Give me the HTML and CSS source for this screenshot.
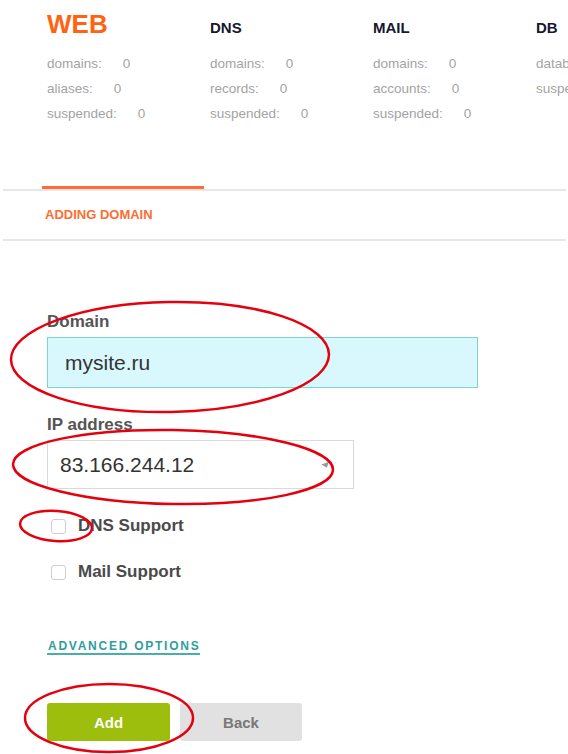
FILE: index.html
```html
<!DOCTYPE html>
<html lang="en">
<head>
<meta charset="UTF-8"/>
<meta name="viewport" content="width=device-width, initial-scale=1.0"/>
<title>Adding domain</title>
<link rel="stylesheet" href="styles.css">
</head>
<body>
<div class="page">
  <!-- Summary of services -->
  <div class="summary">
    <div class="svc-title svc-active">WEB</div>
    <div class="svc-title">DNS</div>
    <div class="svc-title">MAIL</div>
    <div class="svc-title">DB</div>

    <ul class="stats">
      <li>domains:<span class="val">0</span></li>
      <li>aliases:<span class="val">0</span></li>
      <li>suspended:<span class="val">0</span></li>
    </ul>
    <ul class="stats">
      <li>domains:<span class="val">0</span></li>
      <li>records:<span class="val">0</span></li>
      <li>suspended:<span class="val">0</span></li>
    </ul>
    <ul class="stats">
      <li>domains:<span class="val">0</span></li>
      <li>accounts:<span class="val">0</span></li>
      <li>suspended:<span class="val">0</span></li>
    </ul>
    <ul class="stats">
      <li>databases:<span class="val">0</span></li>
      <li>suspended:<span class="val">0</span></li>
    </ul>
  </div>

  <div class="tabs"><div class="tab-active"></div></div>
  <div class="section-head">ADDING DOMAIN</div>

  <!-- Form -->
  <form class="form">
    <label class="field-label">Domain</label>
    <input class="text-input" type="text" value="mysite.ru">

    <label class="field-label gap">IP address</label>
    <div class="select">83.166.244.12<span class="select-arrow"></span></div>

    <div class="check-row first"><span class="checkbox"></span>DNS Support</div>
    <div class="check-row"><span class="checkbox"></span>Mail Support</div>

    <div class="advanced-wrap"><a class="advanced" href="#">ADVANCED OPTIONS</a></div>

    <div class="buttons">
      <button type="button" class="btn btn-add">Add</button>
      <button type="button" class="btn btn-back">Back</button>
    </div>
  </form>

  <!-- Hand-drawn red marks over the screenshot -->
  <svg class="marks" width="568" height="754" viewBox="0 0 568 754">
    <ellipse cx="170" cy="357" rx="159" ry="55" transform="rotate(-1 170 357)"/>
    <ellipse cx="173" cy="467" rx="160" ry="37" transform="rotate(1 173 467)"/>
    <ellipse cx="56" cy="526" rx="36" ry="15" transform="rotate(4 56 526)"/>
    <ellipse cx="109" cy="718" rx="84" ry="34"/>
  </svg>
</div>
</body>
</html>
```

FILE: styles.css
```css
/* Global */
html, body {
  margin:0; padding:0;
  background:#fff;
  font-family:"Liberation Sans", Arial, sans-serif;
  overflow:hidden;
}
.page {
  position:relative;
  width:568px;
  height:754px;
  overflow:hidden;
}

/* Summary => 4 columns, titles on first row, stats below */
.summary {
  display:grid;
  grid-template-columns:repeat(4, 163px);
  align-items:baseline;
  padding:9px 0 0 47px;
}
.svc-title {
  font-weight:bold;
  font-size:15px;
  line-height:30px;
  color:#17172f;
}
.svc-title.svc-active {
  font-size:26px;
  color:#ff6310;
}
.stats {
  list-style:none;
  margin:8px 0 0;
  padding:0;
  font-size:13.5px;
  line-height:25px;
  color:#a3a3a3;
  white-space:nowrap;
  align-self:start;
}
.stats .val { margin-left:21px; }

/* Tabs line */
.tabs {
  margin:60px 2px 0 3px;
  border-bottom:2px solid #e7e7e7;
}
.tab-active {
  width:162px;
  height:3px;
  margin-left:39px;
  background:#ff6a35;
}
.section-head {
  margin:0 2px 0 3px;
  padding-left:42px;
  line-height:48px;
  font-size:13px;
  font-weight:bold;
  color:#ff6d33;
  border-bottom:2px solid #e7e7e7;
}

/* Form */
.form {
  display:flex;
  flex-direction:column;
  align-items:flex-start;
  padding:71px 0 0 47px;
}
.field-label {
  font-size:17px;
  font-weight:bold;
  line-height:20px;
  color:#555;
  margin-bottom:5px;
}
.field-label.gap { margin-top:27px; }
.text-input {
  box-sizing:border-box;
  width:431px;
  height:51px;
  margin:0;
  padding:0 0 0 17px;
  border:1px solid #80d4cb;
  background:#d8f8fd;
  font-family:inherit;
  font-size:21px;
  color:#333;
  outline:none;
}
.select {
  position:relative;
  box-sizing:border-box;
  width:307px;
  height:49px;
  padding-left:12px;
  border:1px solid #dadada;
  font-size:21px;
  line-height:47px;
  color:#333;
}
.select-arrow {
  position:absolute;
  right:23px;
  top:22px;
  width:0; height:0;
  border-left:4px solid transparent;
  border-right:4px solid transparent;
  border-top:5px solid #9a9a9a;
  transform:rotate(-20deg);
}
.check-row {
  display:flex;
  align-items:center;
  margin-top:26px;
  font-size:17px;
  font-weight:bold;
  line-height:20px;
  color:#4a4a4a;
}
.check-row.first { margin-top:27px; }
.checkbox {
  box-sizing:border-box;
  width:15px; height:15px;
  margin:0 12px 0 4px;
  border:1px solid #cfcfcf;
  border-radius:3px;
  background:#fff;
}
.advanced-wrap {
  margin-top:56px;
  line-height:13px;
}
.advanced {
  display:inline-block;
  padding-left:1px;
  font-size:12px;
  font-weight:bold;
  letter-spacing:1.75px;
  color:#2f9d9d;
  text-decoration:none;
  border-bottom:2px solid #4aaead;
}
.buttons {
  display:flex;
  gap:10px;
  margin-top:48px;
}
.btn {
  height:38px;
  border:none;
  border-radius:3px;
  font-family:inherit;
  font-size:15px;
  font-weight:bold;
  cursor:pointer;
}
.btn-add {
  width:123px;
  background:#9dbe0c;
  color:#fff;
}
.btn-back {
  width:122px;
  background:#e1e1e1;
  color:#777;
}

/* Red annotation ellipses lie over the form */
.marks {
  position:absolute;
  left:0; top:0;
  pointer-events:none;
}
.marks ellipse {
  fill:none;
  stroke:#e5000f;
  stroke-width:2.5;
}
```
